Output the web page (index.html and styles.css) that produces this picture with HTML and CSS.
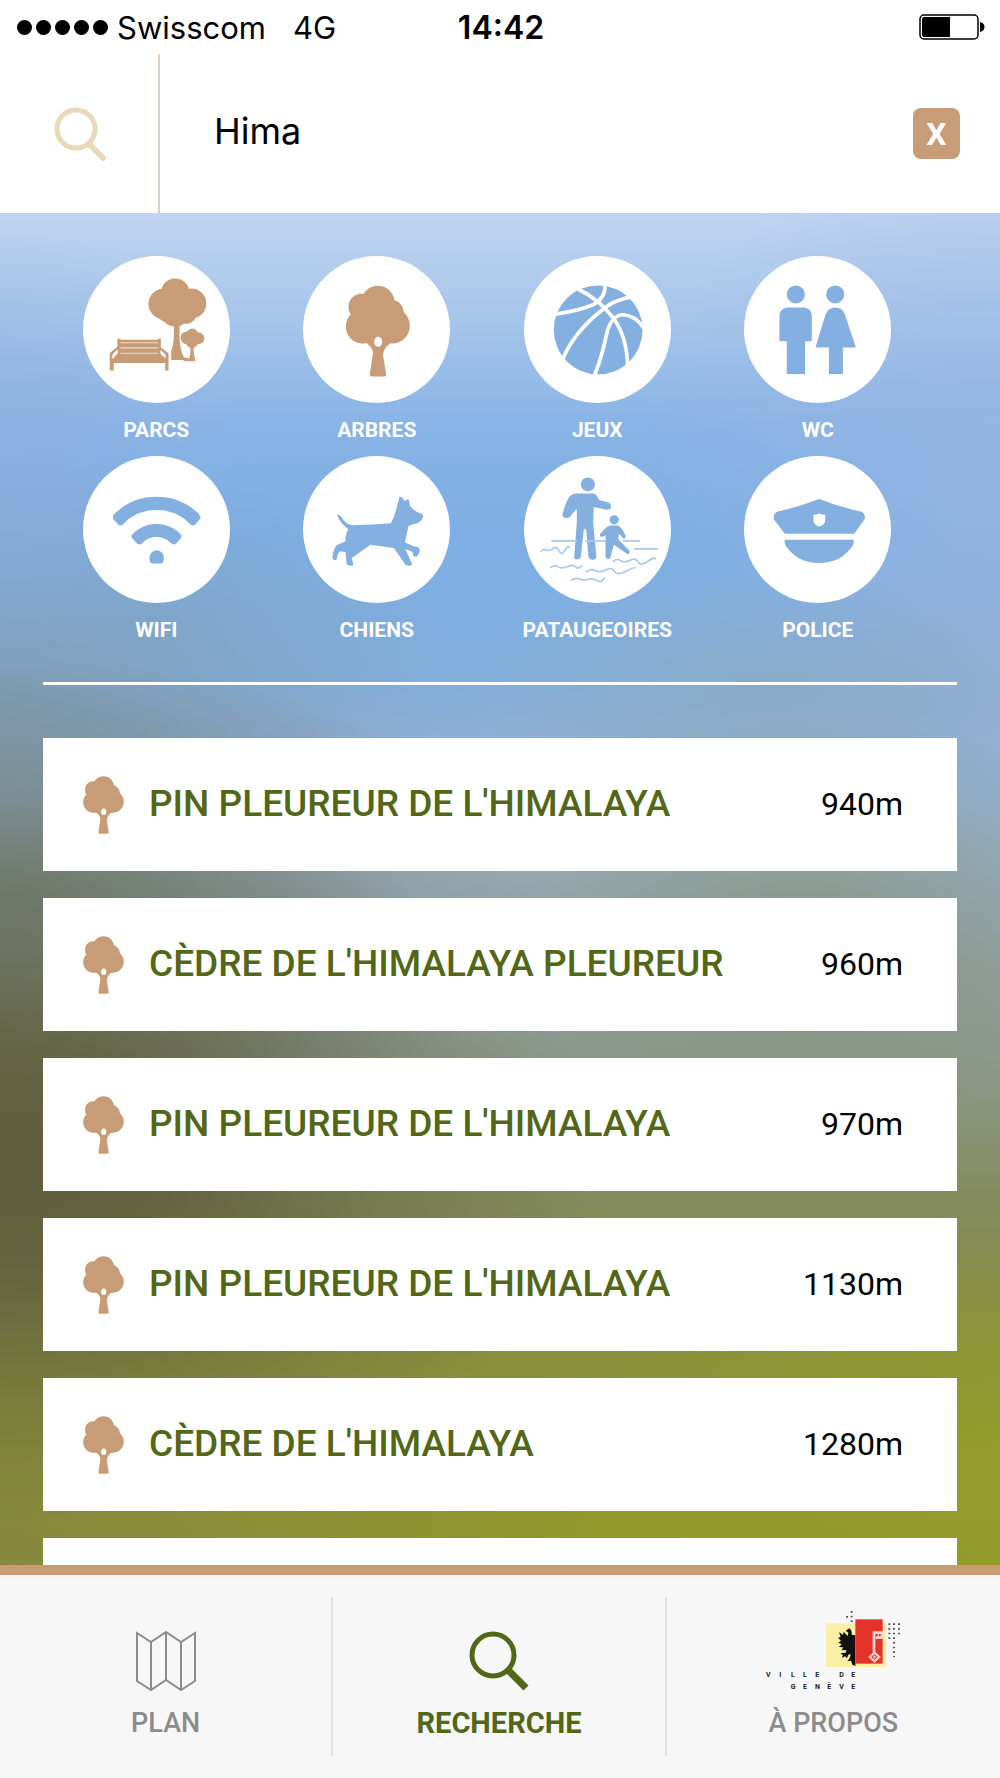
FILE: index.html
```html
<!DOCTYPE html>
<html lang="fr">
<head>
  <meta charset="UTF-8">
  <meta name="viewport" content="width=device-width, initial-scale=1.0">
  <title>Recherche</title>
  <link rel="stylesheet" href="styles.css">
</head>
<body>
  <svg class="defs" width="0" height="0" aria-hidden="true">
    <symbol id="tree" viewBox="0 0 192 274">
      <circle cx="96" cy="51" r="50"/>
      <circle cx="47" cy="64" r="39"/>
      <circle cx="136" cy="80" r="37"/>
      <circle cx="51" cy="123" r="51"/>
      <circle cx="139" cy="121" r="53"/>
      <circle cx="96" cy="100" r="56"/>
      <path d="M58 168 L74 184 Q84 196 80 212 L72 266 Q72 273 79 273 H114 Q122 273 121 266 L112 212 Q111 196 122 184 L138 168 L120 140 H70Z"/>
      <ellipse cx="97" cy="169" rx="12" ry="15" fill="#fff"/>
    </symbol>
  </svg>

  <div class="status">
    <div class="carrier">
      <span class="signal"><i></i><i></i><i></i><i></i><i></i></span>
      <span>Swisscom</span>
      <span class="network">4G</span>
    </div>
    <time>14:42</time>
    <svg class="battery" viewBox="0 0 66 26">
      <rect x="1" y="1" width="58" height="24" rx="4" fill="none" stroke="#000" stroke-width="1.5"/>
      <path d="M5 3 H31 V23 H5 Q3 23 3 21 V5 Q3 3 5 3Z"/>
      <path d="M61 8 Q65.500 9 65.500 13 T61 18Z"/>
    </svg>
  </div>

  <header>
    <label class="search-icon" for="search" aria-label="Rechercher">
      <svg viewBox="0 0 52 54">
        <g fill="none" stroke="#e9d9b8">
          <circle cx="22" cy="22" r="19" stroke-width="5"/>
          <path d="M35 37 L49 51" stroke-width="6" stroke-linecap="round"/>
        </g>
      </svg>
    </label>
    <input id="search" type="text" value="Hima">
    <button class="clear" type="button">X</button>
  </header>

  <main>
    <div class="categories">
      <button type="button">
        <svg class="brown" viewBox="42 47 440 440">
          <circle cx="284" cy="190" r="46"/><circle cx="318" cy="156" r="42"/><circle cx="366" cy="189" r="45"/>
          <circle cx="318" cy="214" r="44"/><circle cx="350" cy="218" r="32"/><circle cx="296" cy="208" r="37"/>
          <path d="M314 240 H331 V292 Q333 332 344 350 L360 354 Q364 345 364 310 H372 Q373 346 379 362 H346 L340 358 H306 V332 Q314 310 314 280Z"/>
          <circle cx="353" cy="292" r="19"/><circle cx="369" cy="281" r="17"/><circle cx="387" cy="293" r="18"/><circle cx="368" cy="303" r="19"/>
          <path d="M145 295 H154 V298 H266 V295 H275 V320 L298 338 V390 H288 V367 H134 V390 H122 V338 L145 318Z"/>
          <path d="M154 307 H266 M154 322 H266 M154 338 H266" stroke="#ecd9c8" stroke-width="3"/>
          <path d="M146 326 L130 342 V356 L146 338Z M274 328 L289 342 V354 L274 340Z" fill="#fff"/>
        </svg>
        <span>PARCS</span>
      </button>
      <button type="button">
        <svg class="brown" viewBox="0 0 440 440"><use href="#tree" x="128" y="88" width="192" height="274"/></svg>
        <span>ARBRES</span>
      </button>
      <button type="button">
        <svg class="blue" viewBox="45 47 440 440">
          <circle cx="267" cy="268" r="133"/>
          <g fill="none" stroke="#fff" stroke-width="11">
            <path d="M205 145 Q268 175 312 232 Q352 286 355 372"/>
            <path d="M288 130 Q290 172 252 193 Q212 210 140 221"/>
            <path d="M362 170 Q310 180 276 211 Q195 275 161 355"/>
            <path d="M404 263 Q374 221 338 223 Q304 228 292 282 Q278 350 256 404"/>
          </g>
        </svg>
        <span>JEUX</span>
      </button>
      <button type="button">
        <svg class="blue" viewBox="705 47 440 440">
          <circle cx="860" cy="162" r="27"/>
          <path d="M835 201 H885 Q908 204 908 228 V302 H888 V400 H833 V302 H811 V228 Q811 204 835 201Z"/>
          <circle cx="978" cy="162" r="27"/>
          <path d="M978 201 Q1000 201 1007 222 L1040 321 H1001 V400 H959 V321 H919 L949 222 Q957 201 978 201Z"/>
        </svg>
        <span>WC</span>
      </button>
      <button type="button">
        <svg class="blue" viewBox="42 31 440 440">
          <path d="M150 219 Q196 173 262 173 T375 219" fill="none" stroke="#83b0e1" stroke-width="40"/>
          <path d="M133 208 Q128 214 133 220 L147 236 Q154 242 161 236 L170 226 L146 196Z M391 208 Q397 214 391 220 L378 236 Q371 242 364 236 L355 226 L379 196Z"/>
          <path d="M206 277 Q228 254 262 254 T318 277" fill="none" stroke="#83b0e1" stroke-width="39"/>
          <path d="M190 265 Q184 271 190 278 L204 293 Q211 299 218 293 L226 284 L203 253Z M334 265 Q340 271 334 278 L321 293 Q314 299 307 293 L298 284 L322 253Z"/>
          <path d="M262 313 Q284 316 284 336 Q284 352 275 353 H250 Q241 352 241 336 Q242 316 262 313Z"/>
        </svg>
        <span>WIFI</span>
      </button>
      <button type="button">
        <svg class="blue" viewBox="702 31 440 440">
          <path d="M804 207 Q812 205 820 218 Q830 236 851 238 Q910 236 965 232 Q975 216 980 194 L991 153 Q1000 152 1006 166 L1017 160 Q1022 170 1022 180 Q1038 200 1058 204 Q1064 212 1058 221 Q1048 233 1037 234 L1018 240 Q1012 268 1007 289 Q1028 301 1047 304 Q1054 310 1050 320 L1044 332 L1032 331 L1030 318 L1008 309 Q1018 330 1029 356 Q1020 363 1008 356 L974 306 L904 297 L848 336 L853 357 Q844 362 833 356 L829 318 L813 316 Q803 326 803 341 Q795 346 790 336 Q791 315 802 299 L829 286 Q829 262 838 250 Q812 232 804 207Z"/>
        </svg>
        <span>CHIENS</span>
      </button>
      <button type="button">
        <svg class="blue" viewBox="45 31 440 440">
          <circle cx="236" cy="116" r="21"/>
          <path d="M200 143 H253 Q262 144 270 163 L300 171 Q308 178 304 188 Q296 194 288 191 L254 184 L252 230 L262 334 Q257 346 245 341 L238 334 L231 250 H224 L215 334 Q206 346 195 336 L203 230 V188 L184 211 Q175 222 163 214 Q158 208 161 202 Q172 162 184 150 Q190 144 200 143Z"/>
          <circle cx="315" cy="222" r="14"/>
          <path d="M303 239 H327 Q336 244 349 268 Q350 278 344 279 L328 263 V281 L360 314 Q364 323 355 325 L314 297 L303 336 Q296 343 289 334 V268 L279 273 Q271 273 272 266 Q288 243 303 239Z"/>
          <g fill="none" stroke="#a9c9ec" stroke-width="5">
            <path d="M127 285 H203 M228 285 H290 M340 285 H392 M374 309 H446"/>
            <path d="M95 318 Q102 307 112 312 T132 308 T150 315 T168 313 T182 307"/>
            <path d="M124 366 Q134 354 146 362 T176 362 T200 363 T220 358"/>
            <path d="M310 348 Q322 336 334 344 T362 343 T386 348 T416 346 T438 341"/>
            <path d="M231 379 Q245 366 258 374 T290 372 T316 376 T350 376 T380 366"/>
            <path d="M186 404 Q198 394 212 399 T238 400 T264 404 T286 395"/>
          </g>
        </svg>
        <span>PATAUGEOIRES</span>
      </button>
      <button type="button">
        <svg class="blue" viewBox="705 31 440 440">
          <path d="M930 160 Q990 184 1058 198 Q1070 206 1066 220 L1035 264 H827 L795 222 Q790 204 806 197 Q870 184 930 160Z"/>
          <path d="M827 282 H1033 Q1036 297 1022 310 Q990 351 930 351 T838 310 Q824 297 827 282Z"/>
          <path d="M913 207 Q922 207 930 203 Q940 207 948 207 V226 Q946 237 930 242 Q915 237 913 226Z" fill="#fff"/>
        </svg>
        <span>POLICE</span>
      </button>
    </div>

    <ul class="results">
      <li>
        <svg class="brown" aria-hidden="true"><use href="#tree"/></svg>
        <h2>PIN PLEUREUR DE L'HIMALAYA</h2>
        <span>940m</span>
      </li>
      <li>
        <svg class="brown" aria-hidden="true"><use href="#tree"/></svg>
        <h2>CÈDRE DE L'HIMALAYA PLEUREUR</h2>
        <span>960m</span>
      </li>
      <li>
        <svg class="brown" aria-hidden="true"><use href="#tree"/></svg>
        <h2>PIN PLEUREUR DE L'HIMALAYA</h2>
        <span>970m</span>
      </li>
      <li>
        <svg class="brown" aria-hidden="true"><use href="#tree"/></svg>
        <h2>PIN PLEUREUR DE L'HIMALAYA</h2>
        <span>1130m</span>
      </li>
      <li>
        <svg class="brown" aria-hidden="true"><use href="#tree"/></svg>
        <h2>CÈDRE DE L'HIMALAYA</h2>
        <span>1280m</span>
      </li>
      <li></li>
    </ul>
  </main>

  <nav>
    <a href="#plan">
      <svg width="60" height="60" viewBox="0 0 60 60" fill="none" stroke="#8c8c8c" stroke-width="2">
        <path d="M1 2 L15 11 L30 1 L45 11 L59 2 V50 L45 59 L30 49 L15 59 L1 50Z M15 11 V59 M30 1 V49 M45 11 V59"/>
      </svg>
      <span>PLAN</span>
    </a>
    <a href="#recherche" class="active">
      <svg width="60" height="60" viewBox="0 0 60 60" fill="none" stroke="#526718">
        <circle cx="24" cy="24" r="21" stroke-width="5"/>
        <path d="M39 39 L57 57" stroke-width="7"/>
      </svg>
      <span>RECHERCHE</span>
    </a>
    <a href="#apropos">
      <svg width="136" height="82" viewBox="140 185 408 246">
        <rect x="323" y="228" width="181" height="131" fill="#fbf0a6"/>
        <path d="M411 264 L400 262 Q402 250 393 243 L382 250 L390 256 L388 266 L376 253 L374 262 L362 255 L367 269 L359 271 L368 280 L360 286 L370 291 L362 299 L374 300 L370 309 L384 308 L382 316 L366 318 L374 324 L370 332 L381 327 L386 333 L390 322 L397 320 L394 333 L387 342 L398 340 L402 352 L411 356Z" fill="#111"/>
        <rect x="411" y="216" width="82" height="133" fill="#e6332a"/>
        <g fill="none" stroke="#fbd9d2">
          <path d="M467 316 V256 H491 V271 H472" stroke-width="8"/>
          <path d="M469 316 L483 329 L469 342 L454 329Z" stroke-width="6"/>
          <path d="M480 257 V272 M469 324 V334 M464 329 H474" stroke-width="3"/>
        </g>
        <g fill="none" stroke="#555" stroke-width="6" stroke-dasharray="5 9">
          <path d="M400 191 V224 M386 206 V211 M513 228 V275 M527 228 V329 M542 228 V262"/>
        </g>
        <g class="logo-text">
          <text x="143 183 218 254 291 330 363 399" y="388">VILLE DE</text>
          <text x="217 254 290 327 363 399" y="424">GENÈVE</text>
        </g>
      </svg>
      <span>À PROPOS</span>
    </a>
  </nav>
</body>
</html>
```

FILE: styles.css
```css
:root {
  --brown: #c89c76;
  --blue: #83b0e1;
  --green: #526718;
  --grey: #8c8c8c;
}

* {
  box-sizing: border-box;
}

body {
  margin: 0;
  height: 100vh;
  display: flex;
  flex-direction: column;
  background: #fff;
  color: #000;
  font-family: Roboto, "Liberation Sans", sans-serif;
}

button {
  padding: 0;
  border: none;
  background: none;
  font-family: inherit;
  cursor: pointer;
}

.defs {
  position: absolute;
}

.brown {
  fill: var(--brown);
}

.blue {
  fill: var(--blue);
}

/* status bar */
.status {
  flex: none;
  height: 54px;
  padding: 0 15px 0 17px;
  display: grid;
  grid-template-columns: 1fr auto 1fr;
  align-items: center;
  font-family: Inter, sans-serif;
  font-size: 31px;
}

.carrier {
  display: flex;
  align-items: center;
}

.signal {
  display: flex;
  gap: 4px;
  margin-right: 9px;
}

.signal i {
  width: 15px;
  height: 15px;
  border-radius: 50%;
  background: #000;
}

.network {
  margin-left: 27px;
}

.status time {
  font-size: 32px;
  font-weight: 600;
}

.battery {
  width: 66px;
  height: 26px;
  justify-self: end;
}

/* search field */
header {
  flex: none;
  height: 159px;
  padding-right: 40px;
  display: flex;
  align-items: center;
}

.search-icon {
  height: 100%;
  width: 160px;
  padding-left: 54px;
  display: flex;
  align-items: center;
  border-right: 2px solid #e5cbb8;
}

.search-icon svg {
  width: 52px;
  height: 54px;
}

header input {
  flex: 1;
  min-width: 0;
  height: 100%;
  padding: 0 20px 5px 54px;
  border: none;
  outline: none;
  font: 36px Inter, sans-serif;
}

.clear {
  width: 47px;
  height: 51px;
  border-radius: 8px;
  background: var(--brown);
  color: #fff;
  font-size: 32px;
  font-weight: 700;
}

/* blurred landscape behind the results */
main {
  flex: 1;
  min-height: 0;
  overflow-y: auto;
  scrollbar-width: none;
  padding: 43px 43px 0;
  background:
    radial-gradient(ellipse 60% 27% at 0% 70%, #5e5d3c 0%, rgba(94, 93, 60, 0.850) 30%, rgba(94, 93, 60, 0.350) 65%, rgba(94, 93, 60, 0) 100%),
    radial-gradient(ellipse 55% 18% at 0% 51%, rgba(108, 118, 104, 0.800) 0%, rgba(108, 118, 104, 0.400) 55%, rgba(108, 118, 104, 0) 100%),
    radial-gradient(ellipse 38% 16% at 80% 53%, rgba(128, 144, 118, 0.700) 0%, rgba(128, 144, 118, 0) 100%),
    radial-gradient(ellipse 36% 10% at 78% 36%, rgba(140, 168, 186, 0.700) 0%, rgba(140, 168, 186, 0) 100%),
    radial-gradient(ellipse 20% 20% at 100% 36%, rgba(150, 178, 218, 0.800) 0%, rgba(150, 178, 218, 0) 100%),
    radial-gradient(ellipse 36% 24% at 100% 18%, rgba(154, 182, 228, 0.650) 0%, rgba(154, 182, 228, 0) 100%),
    radial-gradient(ellipse 24% 16% at 0% 17%, rgba(142, 174, 222, 0.600) 0%, rgba(142, 174, 222, 0) 100%),
    radial-gradient(ellipse 50% 18% at 0% 36%, rgba(128, 156, 178, 0.900) 0%, rgba(128, 156, 178, 0) 100%),
    radial-gradient(ellipse 60% 22% at 0% 100%, rgba(132, 134, 64, 0.900) 0%, rgba(132, 134, 64, 0) 100%),
    radial-gradient(ellipse 50% 16% at 100% 92%, rgba(148, 158, 42, 0.800) 0%, rgba(148, 158, 42, 0) 100%),
    linear-gradient(#c0d4f0 0%, #a9c7eb 7%, #88b3e5 16%, #7eaee4 24%, #82b0e0 35%, #90b0d8 39%, #9aaebd 49%, #8f9b94 61%, #838b5c 73%, #89903c 85%, #91982c 97%);
}

.categories {
  display: grid;
  grid-template-columns: repeat(4, 1fr);
  row-gap: 13px;
  padding: 0 29px 39px 3px;
}

.categories button {
  display: flex;
  flex-direction: column;
  align-items: center;
  gap: 15px;
  color: #fff;
  font-size: 21px;
  font-weight: 700;
  line-height: 25px;
}

.categories svg {
  width: 147px;
  height: 147px;
  border-radius: 50%;
  background: #fff;
}

.results {
  margin: 0;
  padding: 53px 0 0;
  border-top: 3px solid #fff;
  list-style: none;
  display: flex;
  flex-direction: column;
  gap: 27px;
}

.results li {
  height: 133px;
  padding: 0 54px 0 40px;
  display: flex;
  align-items: center;
  background: #fff;
}

.results svg {
  width: 41px;
  height: 58px;
}

.results h2 {
  flex: 1;
  margin: 0 0 3px 25px;
  color: var(--green);
  font-size: 37px;
  font-weight: 500;
}

.results span {
  padding-bottom: 2px;
  font-size: 32px;
}

/* bottom tabs */
nav {
  flex: none;
  height: 213px;
  padding: 22px 0;
  display: grid;
  grid-template-columns: repeat(3, 1fr);
  border-top: 10px solid var(--brown);
  background: #f7f7f7;
}

nav a {
  padding-bottom: 17px;
  display: flex;
  flex-direction: column;
  align-items: center;
  justify-content: flex-end;
  gap: 16px;
  border-right: 2px solid #e2e2e2;
  color: var(--grey);
  font-size: 27px;
  font-weight: 500;
  line-height: 32px;
  text-decoration: none;
}

nav a:last-child {
  border-right: none;
}

nav .active {
  color: var(--green);
  font-size: 29px;
  font-weight: 700;
}

.logo-text {
  fill: #222;
  font-size: 21px;
  font-weight: 700;
}
```
